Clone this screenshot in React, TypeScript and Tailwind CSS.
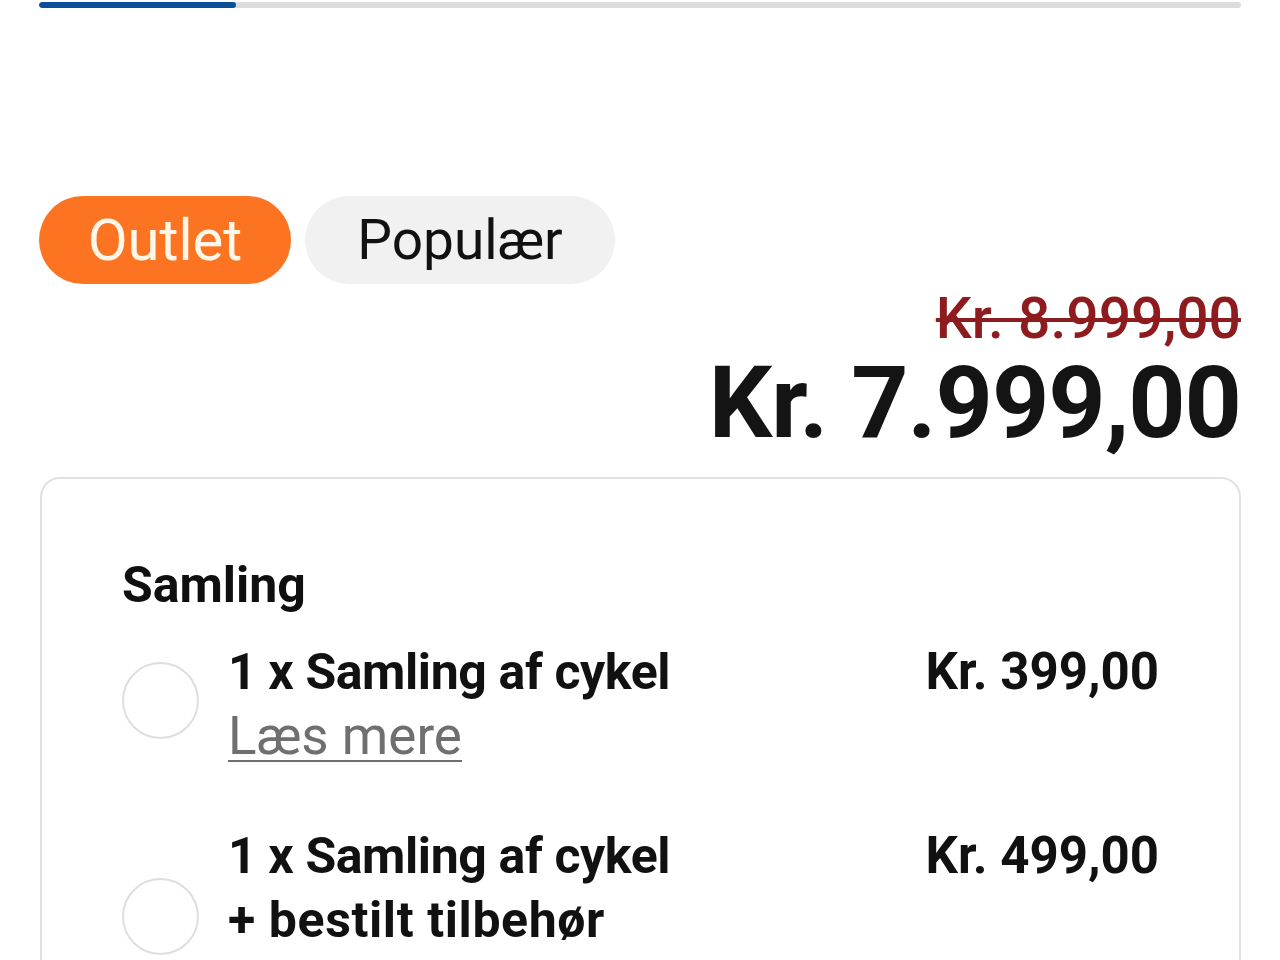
import React from "react";

function Radio() {
  return <div className="mb-[8px] h-[77px] w-[77px] shrink-0 rounded-full border-2 border-[#dedede] bg-white" />;
}

export default function App() {
  return (
    <div className="min-h-[960px] w-[1280px] bg-white px-[39px] pt-[2px] text-[#111111] [font-family:Roboto,'Noto_Sans',sans-serif]">
      <div className="flex h-[6px] w-full overflow-hidden rounded-full bg-[#dcdcdc]">
        <div className="h-full w-[197px] rounded-full bg-[#0b4f9b]" />
      </div>

      <div className="mt-[188px] flex gap-[14px]">
        <div className="flex h-[88px] w-[252px] items-center justify-center rounded-full bg-[#fc7322] text-[58px] leading-none text-[#fff7ea]">
          Outlet
        </div>
        <div className="flex h-[88px] w-[310px] items-center justify-center rounded-full bg-[#f1f1f1] text-[55px] leading-none text-[#111111]">
          Populær
        </div>
      </div>

      <div className="mt-[6px] flex flex-col items-end">
        <div className="text-[57px] font-medium leading-none text-[#8e1b1d] line-through decoration-[4px]">
          Kr. 8.999,00
        </div>
        <div className="mt-[6px] text-[100px] font-bold leading-none tracking-[-1px] text-[#141414]">
          Kr. 7.999,00
        </div>
      </div>

      <div className="mt-[24px] ml-[1px] h-[600px] rounded-[20px] border-2 border-[#e1e1e1] px-[80px] pt-[81px]">
        <div className="text-[50px] font-bold leading-none text-[#0f0f0f]">Samling</div>

        <div className="mt-[30px] flex items-center gap-[29px]">
          <Radio />
          <div className="flex flex-1 items-start justify-between">
            <div className="flex flex-col text-[50px] leading-[64px]">
              <span className="font-bold tracking-[-0.4px]">1 x Samling af cykel</span>
              <span className="text-[53px] text-[#6f6f6f] underline decoration-[2px] underline-offset-[6px]">Læs mere</span>
            </div>
            <div className="text-[51px] font-bold leading-[64px]">Kr. 399,00</div>
          </div>
        </div>

        <div className="mt-[56px] flex items-center gap-[29px]">
          <Radio />
          <div className="flex flex-1 items-start justify-between">
            <div className="flex flex-col text-[50px] leading-[64px]">
              <span className="font-bold tracking-[-0.4px]">1 x Samling af cykel</span>
              <span className="font-bold tracking-[0.6px]">+ bestilt tilbehør</span>
              <span className="text-[53px] text-[#6f6f6f] underline decoration-[2px] underline-offset-[6px]">Læs mere</span>
            </div>
            <div className="text-[51px] font-bold leading-[64px]">Kr. 499,00</div>
          </div>
        </div>
      </div>
    </div>
  );
}
